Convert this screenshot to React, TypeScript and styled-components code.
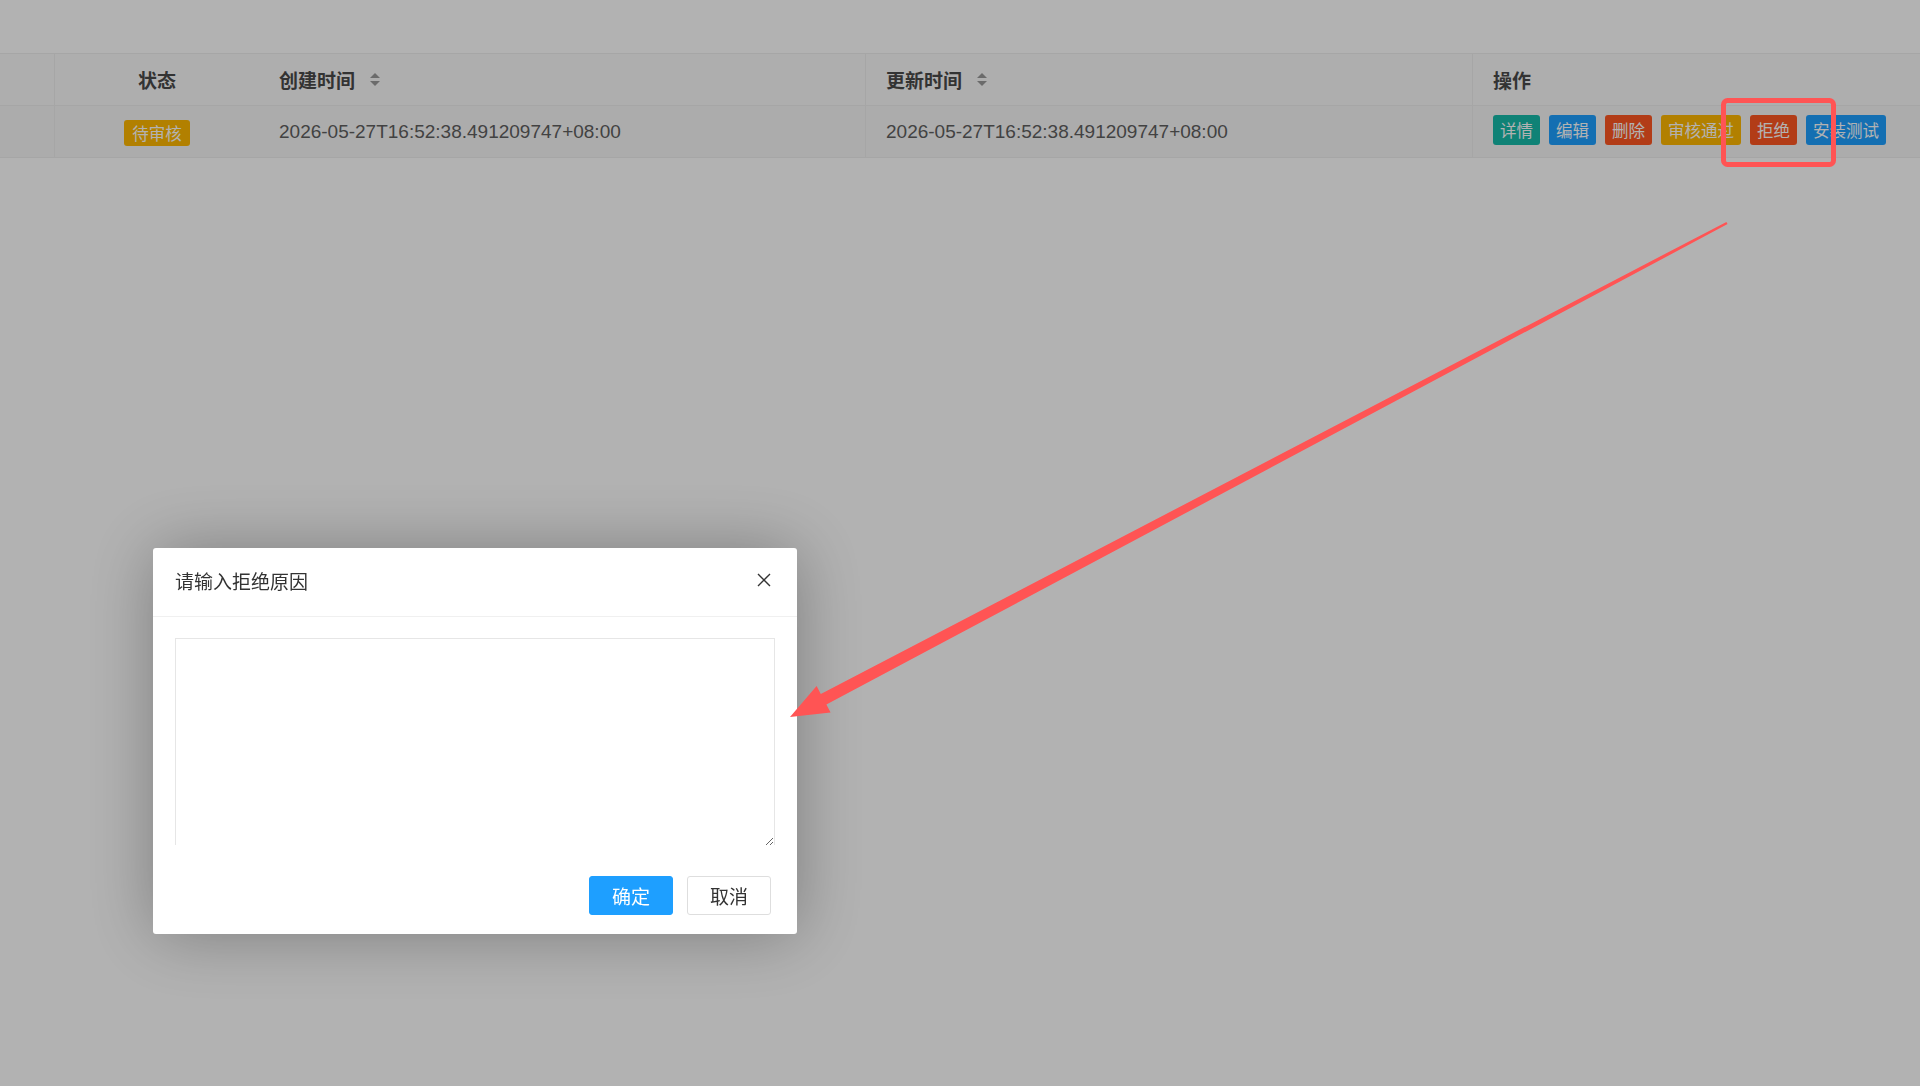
import React from "react";
import styled, { createGlobalStyle } from "styled-components";

const GlobalStyle = createGlobalStyle`
  html, body {
    margin: 0;
    padding: 0;
    background: #fff;
  }
  body {
    font-family: "Liberation Sans", "Noto Sans CJK SC", sans-serif;
    color: #5f5f5f;
  }
  * {
    box-sizing: border-box;
  }
`;

const Page = styled("div")({
  width: "1920px",
  height: "1086px",
  paddingTop: "53px",
  overflow: "hidden",
});

const Table = styled("div")({
  borderTop: "1px solid #eee",
});

const Row = styled("div")<{ $head?: boolean }>(({ $head }) => ({
  display: "grid",
  gridTemplateColumns: "55px 204px 607px 607px 1fr",
  height: "52px",
  borderBottom: "1px solid #eee",
  background: $head ? "#fafafa" : "#f6f6f6",
}));

const Cell = styled("div")<{ $divider?: boolean; $center?: boolean; $head?: boolean }>(
  ({ $divider, $center, $head }) => ({
    display: "flex",
    alignItems: "center",
    justifyContent: $center ? "center" : "flex-start",
    gap: "15px",
    padding: "0 20px",
    borderRight: $divider ? "1px solid #eee" : "none",
    fontSize: "19px",
    fontWeight: $head ? 700 : 400,
    color: $head ? "#4a4a4a" : "#5f5f5f",
    whiteSpace: "nowrap",
  })
);

const Actions = styled(Cell)({
  gap: "9px",
  paddingBottom: "4px",
});

const Tag = styled("span")({
  display: "inline-flex",
  alignItems: "center",
  height: "26px",
  padding: "0 8px",
  marginTop: "2px",
  borderRadius: "3px",
  background: "#ffb800",
  color: "#fff",
  fontSize: "16.5px",
});

const ActionButton = styled("span")<{ color: string }>(({ color }) => ({
  display: "inline-flex",
  alignItems: "center",
  height: "30px",
  padding: "0 7px",
  borderRadius: "3px",
  background: color,
  color: "#fff",
  fontSize: "16.5px",
}));

const Mask = styled("div")({
  position: "fixed",
  inset: 0,
  background: "rgba(0, 0, 0, 0.3)",
});

const Dialog = styled("div")({
  position: "fixed",
  left: "153px",
  top: "548px",
  width: "644px",
  background: "#fff",
  borderRadius: "3px",
  boxShadow: "1px 1px 68px rgba(0, 0, 0, 0.3)",
  display: "flex",
  flexDirection: "column",
});

const DialogTitle = styled("div")({
  height: "69px",
  display: "flex",
  alignItems: "center",
  justifyContent: "space-between",
  padding: "0 26px 4px 22px",
  borderBottom: "1px solid #f0f0f0",
  fontSize: "19px",
  color: "#333",
});

const CloseIcon = () => (
  <svg width="14" height="14" viewBox="0 0 14 14">
    <path d="M1 1 L13 13 M13 1 L1 13" stroke="#333" strokeWidth="1.4" fill="none" />
  </svg>
);

const DialogBody = styled("div")({
  padding: "21px 22px 0 22px",
});

const TextAreaClip = styled("div")({
  height: "207px",
  overflow: "hidden",
});

const ReasonInput = styled("textarea")({
  display: "block",
  width: "600px",
  height: "209px",
  margin: 0,
  padding: "8px 12px",
  border: "1px solid #e6e6e6",
  outline: "none",
  fontFamily: "inherit",
  fontSize: "19px",
  color: "#333",
});

const DialogFooter = styled("div")({
  display: "flex",
  justifyContent: "flex-end",
  gap: "14px",
  padding: "31px 26px 19px",
});

const DialogButton = styled("button")<{ $primary?: boolean }>(({ $primary }) => ({
  height: "39px",
  padding: "0 22px",
  borderRadius: "3px",
  border: `1px solid ${$primary ? "#1e9fff" : "#dedede"}`,
  background: $primary ? "#1e9fff" : "#fff",
  color: $primary ? "#fff" : "#333",
  fontFamily: "inherit",
  fontSize: "19px",
  cursor: "pointer",
}));

const Overlay = styled("svg")({
  position: "fixed",
  left: 0,
  top: 0,
  pointerEvents: "none",
});

const SortIcon = () => (
  <svg width="10" height="13" viewBox="0 0 10 13">
    <polygon points="0,5 5,0 10,5" fill="#9a9a9a" />
    <polygon points="0,8 5,13 10,8" fill="#9a9a9a" />
  </svg>
);

const actions = [
  { label: "详情", color: "#16baaa" },
  { label: "编辑", color: "#1e9fff" },
  { label: "删除", color: "#ff5722" },
  { label: "审核通过", color: "#ffb800" },
  { label: "拒绝", color: "#ff5722" },
  { label: "安装测试", color: "#1e9fff" },
];

const createdAt = "2026-05-27T16:52:38.491209747+08:00";

export default function App() {
  return (
    <>
      <GlobalStyle />
      <Page>
        <Table>
          <Row $head>
            <Cell $divider />
            <Cell $center $head>状态</Cell>
            <Cell $divider $head>
              创建时间 <SortIcon />
            </Cell>
            <Cell $divider $head>
              更新时间 <SortIcon />
            </Cell>
            <Cell $head>操作</Cell>
          </Row>
          <Row>
            <Cell $divider />
            <Cell $center>
              <Tag>待审核</Tag>
            </Cell>
            <Cell $divider>{createdAt}</Cell>
            <Cell $divider>{createdAt}</Cell>
            <Actions>
              {actions.map((a) => (
                <ActionButton key={a.label} color={a.color}>
                  {a.label}
                </ActionButton>
              ))}
            </Actions>
          </Row>
        </Table>
      </Page>

      <Mask />

      <Dialog>
        <DialogTitle>
          请输入拒绝原因
          <CloseIcon />
        </DialogTitle>
        <DialogBody>
          <TextAreaClip>
            <ReasonInput />
          </TextAreaClip>
        </DialogBody>
        <DialogFooter>
          <DialogButton $primary>确定</DialogButton>
          <DialogButton>取消</DialogButton>
        </DialogFooter>
      </Dialog>

      {/* red marker box and tapered pointer arrow */}
      <Overlay width="1920" height="1086" viewBox="0 0 1920 1086">
        <rect x="1723.5" y="100.5" width="110" height="64" rx="4" fill="none" stroke="#ff5454" strokeWidth="5" />
        <polygon
          points="1726.4,221.9 820.8,694.0 816.6,686 790,717 830.6,712.6 826.4,704.6 1727.6,224.1"
          fill="#ff5454"
        />
      </Overlay>
    </>
  );
}
